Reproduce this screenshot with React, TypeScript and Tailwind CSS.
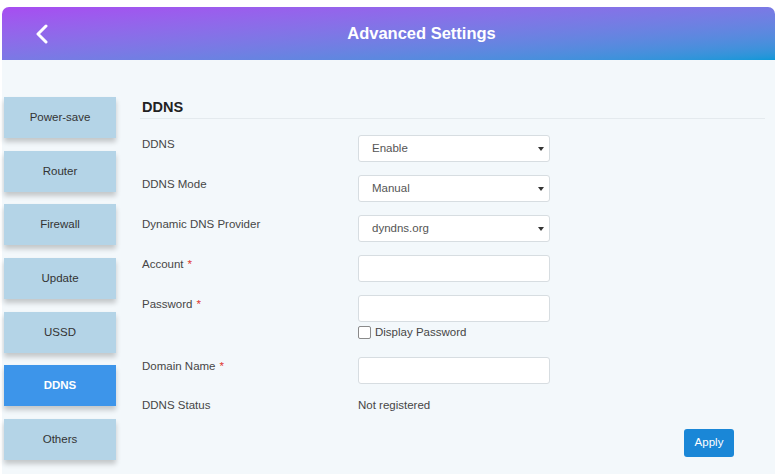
import React from "react";

const TABS = ["Power-save", "Router", "Firewall", "Update", "USSD", "DDNS", "Others"];

const Label: React.FC<{ text: string; required?: boolean }> = ({ text, required }) => (
  <div className="w-[218px] shrink-0 pt-[2px] pl-[2px] text-[11.5px] leading-[14px] text-[#464646]">
    {text}
    {required && <span className="ml-[4px] text-[#e0352f]">*</span>}
  </div>
);

const SelectBox: React.FC<{ value: string }> = ({ value }) => (
  <div className="flex h-[27px] w-[192px] items-center justify-between rounded-[3px] border border-[#d7dde1] bg-white pl-[13px] pr-[5px] text-[11.5px] text-[#555]">
    <span>{value}</span>
    <svg width="6" height="4" viewBox="0 0 6 4">
      <path d="M0 0 L6 0 L3 4 Z" fill="#333" />
    </svg>
  </div>
);

const TextBox: React.FC = () => (
  <input
    type="text"
    className="h-[27px] w-[192px] rounded-[3px] border border-[#d7dde1] bg-white px-2 text-[11.5px] outline-none"
  />
);

export default function App() {
  return (
    <div className="min-h-screen bg-white pl-[2px] pt-[7px] font-['Liberation_Sans',Arial,sans-serif]">
      <div className="w-[773px]">
        {/* header */}
        <header className="flex h-[53px] items-center rounded-t-[7px] bg-linear-to-br from-[#a74cf1] to-[#0898d8]">
          <div className="w-[66px] shrink-0">
            <svg className="ml-[33px]" width="14" height="20" viewBox="0 0 14 20">
              <polyline
                points="11,2 3,10 11,18"
                fill="none"
                stroke="white"
                strokeWidth="3"
                strokeLinecap="round"
                strokeLinejoin="round"
              />
            </svg>
          </div>
          <h1 className="flex-1 text-center text-[16.5px] font-bold text-white">Advanced Settings</h1>
        </header>

        <div className="flex h-[414px] bg-[#f3f8fb]">
          {/* side tabs */}
          <nav className="ml-[2px] flex w-[112px] shrink-0 flex-col gap-[12.7px] pt-[37px]">
            {TABS.map((tab) => (
              <div
                key={tab}
                className={
                  tab === "DDNS"
                    ? "flex h-[41px] items-center justify-center bg-[#3d95ea] text-[11.5px] font-bold text-white shadow-[0_4px_5px_rgba(0,0,0,0.2)]"
                    : "flex h-[41px] items-center justify-center bg-[#b4d4e7] text-[11.5px] text-[#333] shadow-[0_4px_5px_rgba(0,0,0,0.2)]"
                }
              >
                {tab}
              </div>
            ))}
          </nav>

          {/* form */}
          <main className="ml-[24px] flex-1 pr-[10px] pt-[39px]">
            <h2 className="border-b border-[#e4eaee] pb-[2px] pl-[2px] text-[14.5px] font-bold leading-[17px] text-[#222]">
              DDNS
            </h2>

            <div className="mt-[16px] flex flex-col">
              <div className="mb-[13px] flex">
                <Label text="DDNS" />
                <SelectBox value="Enable" />
              </div>
              <div className="mb-[13px] flex">
                <Label text="DDNS Mode" />
                <SelectBox value="Manual" />
              </div>
              <div className="mb-[13px] flex">
                <Label text="Dynamic DNS Provider" />
                <SelectBox value="dyndns.org" />
              </div>
              <div className="mb-[13px] flex">
                <Label text="Account" required />
                <TextBox />
              </div>
              <div className="mb-[18px] flex">
                <Label text="Password" required />
                <div className="flex flex-col">
                  <TextBox />
                  <label className="mt-[4px] flex items-center text-[11.5px] leading-[13px] text-[#464646]">
                    <span className="mr-[4px] h-[13px] w-[13px] rounded-[2px] border border-[#8a8a8a] bg-white" />
                    Display Password
                  </label>
                </div>
              </div>
              <div className="mb-[14px] flex">
                <Label text="Domain Name" required />
                <TextBox />
              </div>
              <div className="flex text-[11.5px] leading-[14px] text-[#464646]">
                <div className="w-[218px] shrink-0 pl-[2px]">DDNS Status</div>
                <div>Not registered</div>
              </div>
            </div>

            <div className="mr-[31px] mt-[17px] flex justify-end">
              <button className="h-[28px] w-[50px] rounded-[3px] bg-[#1a87d7] text-[11.5px] text-white">
                Apply
              </button>
            </div>
          </main>
        </div>
      </div>
    </div>
  );
}
